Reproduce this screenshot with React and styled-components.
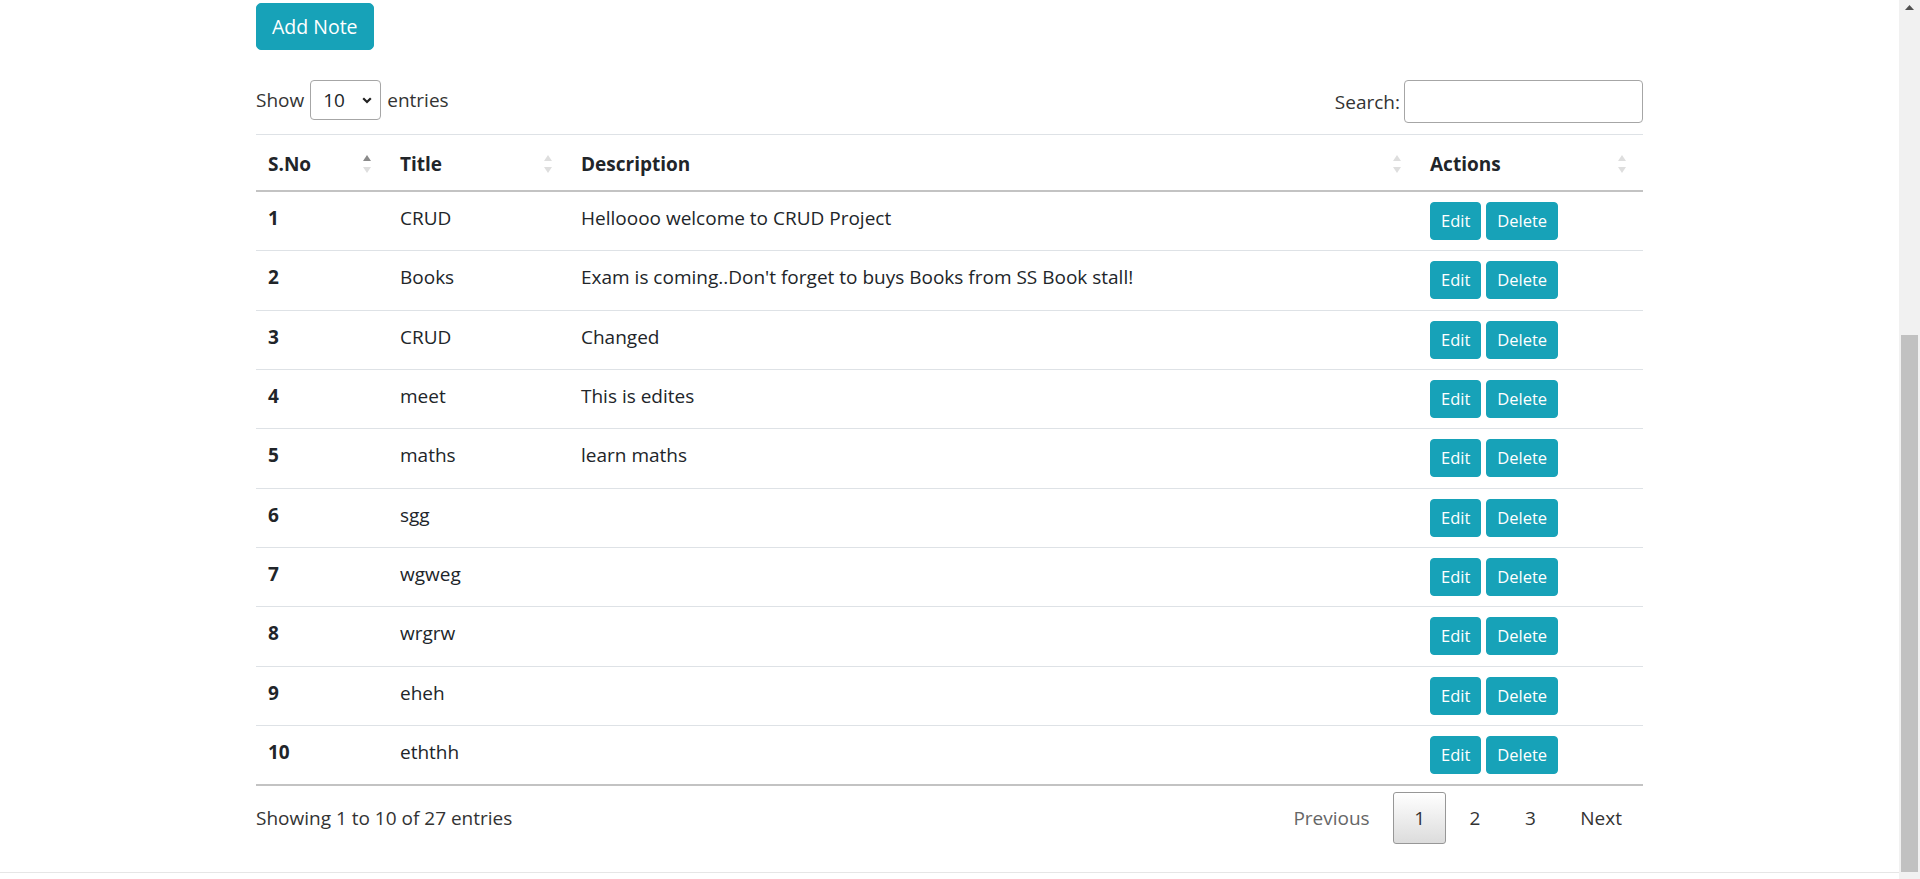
import React from "react";
import styled, { createGlobalStyle } from "styled-components";

const GlobalStyle = createGlobalStyle`
  html, body {
    margin: 0;
    padding: 0;
    height: 100%;
    overflow: hidden;
    background: #fff;
  }
  body {
    font-family: "Open Sans", "Liberation Sans", sans-serif;
    font-size: 19px;
    color: #212529;
  }
`;

const notes = [
  [1, "CRUD", "Helloooo welcome to CRUD Project"],
  [2, "Books", "Exam is coming..Don't forget to buys Books from SS Book stall!"],
  [3, "CRUD", "Changed"],
  [4, "meet", "This is edites"],
  [5, "maths", "learn maths"],
  [6, "sgg", ""],
  [7, "wgweg", ""],
  [8, "wrgrw", ""],
  [9, "eheh", ""],
  [10, "eththh", ""],
];

const columns = [
  { label: "S.No", width: 132, sorted: true },
  { label: "Title", width: 181 },
  { label: "Description", width: 849 },
  { label: "Actions", width: 225 },
];

function SortIcon({ active }) {
  return (
    <SortSvg width="8" height="19" viewBox="0 0 8 19">
      <polygon points="0,6 4,0 8,6" fill={active ? "#8a8a8a" : "#dedede"} />
      <polygon points="0,12 4,18 8,12" fill="#dedede" />
    </SortSvg>
  );
}

function App() {
  return (
    <Window>
      <GlobalStyle />
      <Page>
        <Container>
          <AddButton>Add Note</AddButton>
          <Controls>
            <LengthGroup>
              Show
              <SelectBox>
                <span>10</span>
                <svg width="10" height="7" viewBox="0 0 10 7">
                  <path d="M1.2 1.2 L5 5 L8.8 1.2" fill="none" stroke="#222" strokeWidth="2.2" />
                </svg>
              </SelectBox>
              entries
            </LengthGroup>
            <SearchGroup>
              Search:
              <SearchInput type="search" />
            </SearchGroup>
          </Controls>

          <Table>
            <colgroup>
              {columns.map((c) => (
                <col key={c.label} style={{ width: c.width }} />
              ))}
            </colgroup>
            <thead>
              <tr>
                {columns.map((c) => (
                  <Th key={c.label}>
                    <HeadInner>
                      {c.label}
                      <SortIcon active={c.sorted} />
                    </HeadInner>
                  </Th>
                ))}
              </tr>
            </thead>
            <tbody>
              {notes.map(([no, title, desc], i) => (
                <tr key={no}>
                  <Td bold last={i === notes.length - 1}>{no}</Td>
                  <Td last={i === notes.length - 1}>{title}</Td>
                  <Td last={i === notes.length - 1}>{desc}</Td>
                  <Td last={i === notes.length - 1}>
                    <Actions>
                      <SmallButton>Edit</SmallButton>
                      <SmallButton>Delete</SmallButton>
                    </Actions>
                  </Td>
                </tr>
              ))}
            </tbody>
          </Table>

          <TableFooter>
            <Info>Showing 1 to 10 of 27 entries</Info>
            <Pager>
              <PageButton disabled>Previous</PageButton>
              <PageButton current>1</PageButton>
              <PageButton>2</PageButton>
              <PageButton>3</PageButton>
              <PageButton>Next</PageButton>
            </Pager>
          </TableFooter>
        </Container>
        <BottomEdge />
      </Page>
      <Scrollbar>
        <ScrollArrow>
          <svg width="9" height="5" viewBox="0 0 9 5">
            <polygon points="0,5 4.5,0 9,5" fill="#505050" />
          </svg>
        </ScrollArrow>
        <Thumb />
      </Scrollbar>
    </Window>
  );
}

export default App;

const Window = styled.div`
  display: flex;
  width: 1920px;
  height: 879px;
`;

const Page = styled.div`
  flex: 1;
  display: flex;
  flex-direction: column;
  height: 879px;
  overflow: hidden;
`;

const Container = styled.div`
  width: 1387px;
  margin: 0 auto;
  padding-top: 3px;
`;

const AddButton = styled.button`
  display: block;
  height: 47px;
  padding: 0 15px;
  border: 1px solid #17a2b8;
  border-radius: 5px;
  background: #17a2b8;
  color: #fff;
  font-family: inherit;
  font-size: 19.5px;
  line-height: 45px;
`;

const Controls = styled.div`
  display: flex;
  justify-content: space-between;
  align-items: flex-start;
  margin-top: 30px;
  color: #333;
`;

const LengthGroup = styled.div`
  display: flex;
  align-items: center;
  height: 40px;
`;

const SelectBox = styled.div`
  display: flex;
  align-items: center;
  justify-content: space-between;
  box-sizing: border-box;
  width: 71px;
  height: 40px;
  margin: 0 6px;
  padding: 0 8px 0 12px;
  border: 1px solid #a6a6a6;
  border-radius: 4px;
  color: #212529;
`;

const SearchGroup = styled.div`
  display: flex;
  align-items: center;
  height: 43px;
`;

const SearchInput = styled.input`
  box-sizing: border-box;
  width: 239px;
  height: 43px;
  margin-left: 4px;
  border: 1px solid #a6a6a6;
  border-radius: 4px;
  background: #fff;
  outline: none;
`;

const Table = styled.table`
  width: 1387px;
  margin-top: 11px;
  table-layout: fixed;
  border-collapse: separate;
  border-spacing: 0;
`;

const Th = styled.th`
  padding: 14px 17px 11px 12px;
  border-top: 1px solid #dee2e6;
  border-bottom: 2px solid #c3c3c3;
  font-weight: 700;
  line-height: 30px;
  text-align: left;
`;

const HeadInner = styled.div`
  display: flex;
  align-items: center;
  justify-content: space-between;
`;

const SortSvg = styled.svg`
  flex-shrink: 0;
`;

const Td = styled.td`
  padding: 10px 12px 10.33px;
  border-bottom: ${(p) => (p.last ? "2px solid #c3c3c3" : "1px solid #dee2e6")};
  font-weight: ${(p) => (p.bold ? 700 : 400)};
  line-height: 32px;
  vertical-align: top;
`;

const Actions = styled.div`
  display: flex;
  gap: 5px;
`;

const SmallButton = styled.button`
  height: 38px;
  padding: 0 10px;
  border: 1px solid #17a2b8;
  border-radius: 4px;
  background: #17a2b8;
  color: #fff;
  font-family: inherit;
  font-size: 16.5px;
  line-height: 36px;
`;

const TableFooter = styled.div`
  display: flex;
  justify-content: space-between;
  align-items: center;
  margin-top: 6px;
`;

const Info = styled.div`
  color: #333;
  line-height: 30px;
`;

const Pager = styled.div`
  display: flex;
`;

const PageButton = styled.div`
  box-sizing: border-box;
  height: 52px;
  margin-left: 2.5px;
  padding: 0 20px;
  border: 1px solid ${(p) => (p.current ? "#979797" : "transparent")};
  border-radius: 3px;
  background: ${(p) =>
    p.current ? "linear-gradient(to bottom, #fff 0%, #dcdcdc 100%)" : "transparent"};
  color: ${(p) => (p.disabled ? "#666" : "#333")};
  line-height: 50px;
`;

const BottomEdge = styled.div`
  margin-top: auto;
  height: 6px;
  border-top: 1px solid #e6e6e6;
`;

const Scrollbar = styled.div`
  display: flex;
  flex-direction: column;
  width: 21px;
  height: 879px;
  background: #f1f1f1;
`;

const ScrollArrow = styled.div`
  display: flex;
  justify-content: center;
  padding-top: 5px;
  height: 16px;
`;

const Thumb = styled.div`
  width: 17px;
  height: 537px;
  margin: 314px 0 0 2px;
  background: #c1c1c1;
`;
